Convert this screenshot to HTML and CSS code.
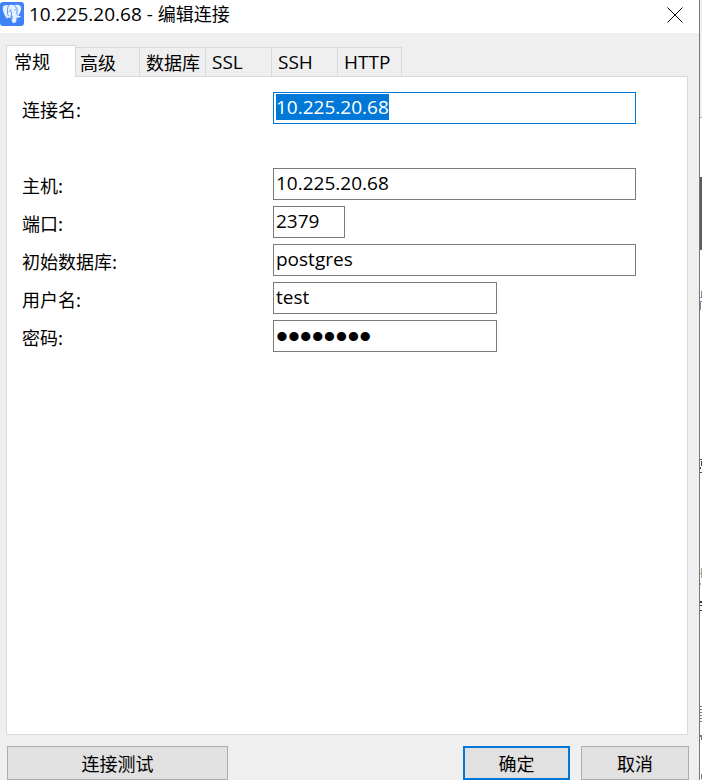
FILE: index.html
```html
<!DOCTYPE html>
<html lang="zh-CN">
<head>
<meta charset="utf-8">
<meta name="viewport" content="width=device-width, initial-scale=1">
<title>10.225.20.68 - 编辑连接</title>
<link rel="stylesheet" href="styles.css">
</head>
<body>
<form class="dialog">
  <header class="titlebar">
    <svg class="logo" viewBox="0 0 24 24" aria-hidden="true">
      <rect width="24" height="24" rx="3" fill="#3f82f7"/>
      <path fill="#e4f2ff" d="M3.2 4.3C4.8 2.6 7.2 3.2 8.6 3.500c2-1 4.200-1 6-.3 2.300-.7 4.700-.4 6 1 1.500 2-.1 6.200-2.200 9.300.6.700 1.700.4 2.400.7-.8 1.500-2.800 1.700-4.200 1.200-.2 2 .1 4.200-1.300 5.200-1 .7-2.700.5-3.200-.8-.6-1.600-.2-3.300-.6-5-.7.700-1.800 1.300-2.800.7-.6.800-1.500 1.200-2.200.4C4.300 13.400 1.700 6.500 3.200 4.300z"/>
      <path fill="none" stroke="#3f82f7" stroke-width=".9" stroke-linecap="round" d="M8.300 4.200c-1.300 2-.4 4.300-.8 6.500-.1 1.300.4 2.400 1.200 3.300M14.800 3.800c2 1.800 2.800 3.800 2 6-.4 1.500.4 2.400 1 3.500M9.200 9.300c1.300-.8 2.400-.3 2.400 1.200 0 1.600-.2 2.800-.4 4.200M12 14.200l.2 2"/>
      <circle cx="10.400" cy="7.800" r=".6" fill="#3f82f7"/><circle cx="15" cy="7.600" r=".6" fill="#3f82f7"/>
    </svg>
    <h1 class="title"><span class="latin">10.225.20.68 - </span>编辑连接</h1>
    <button class="close" type="button" aria-label="关闭">
      <svg viewBox="0 0 16 16" aria-hidden="true"><path d="M.5.5l15 15M15.500.5l-15 15"/></svg>
    </button>
  </header>
  <nav class="tabs" role="tablist">
    <button class="tab active" type="button" role="tab" aria-selected="true">常规</button>
    <button class="tab" type="button" role="tab">高级</button>
    <button class="tab" type="button" role="tab">数据库</button>
    <button class="tab latin" type="button" role="tab">SSL</button>
    <button class="tab latin" type="button" role="tab">SSH</button>
    <button class="tab latin" type="button" role="tab">HTTP</button>
  </nav>
  <main class="panel" role="tabpanel">
    <div class="row name-row"><label for="name">连接名:</label><input id="name" class="field" type="text" value="10.225.20.68"></div>
    <div class="row"><label for="host">主机:</label><input id="host" class="field" type="text" value="10.225.20.68"></div>
    <div class="row"><label for="port">端口:</label><input id="port" class="field port" type="text" value="2379"></div>
    <div class="row"><label for="database">初始数据库:</label><input id="database" class="field" type="text" value="postgres"></div>
    <div class="row"><label for="user">用户名:</label><input id="user" class="field medium" type="text" value="test"></div>
    <div class="row"><label for="password">密码:</label><input id="password" class="field medium secret" type="password" value="password"></div>
  </main>
  <footer class="actions">
    <button class="action test" type="button">连接测试</button>
    <button class="action ok" type="submit">确定</button>
    <button class="action" type="button">取消</button>
  </footer>
</form>
<aside class="backdrop" aria-hidden="true">
  <svg width="2" height="780" viewBox="0 0 2 780" shape-rendering="crispEdges">
    <path fill="#f1f1f1" d="M0 0h2v117H0z"/>
    <path fill="#aaa" d="M0 117h2v1H0z"/>
    <path fill="#5c5c5c" d="M0 177h2v73H0z"/>
    <path fill="#7890a8" d="M1 291h1v6H1zM0 297h2v1H0zM0 301h2v1H0zM0 302h1v8H0z"/>
    <path fill="#444" d="M0 459h2v1H0zM1 461h1v5H1zM0 467h1v2H0zM0 472h2v1H0z"/>
    <path fill="#a99b88" d="M1 568h1v10H1zM0 573h2v1H0zM0 583h1v2H0z"/>
    <path fill="#333" d="M0 601h2v2H0zM0 605h2v1H0zM0 610h2v1H0z"/>
    <path fill="#777" d="M0 706h2v1H0zM0 709h2v1H0zM0 712h2v1H0zM0 715h2v1H0zM0 718h2v1H0zM0 721h2v1H0zM0 735h2v2H0zM1 737h1v3H1zM1 774h1v5H1z"/>
  </svg>
</aside>
<script src="script.js"></script>
</body>
</html>
```
FILE: styles.css
```css
* {
  box-sizing: border-box;
}

body {
  display: flex;
  min-height: 100vh;
  margin: 0;
  background: #fff;
  color: #000;
  font-family: "Noto Sans CJK SC", sans-serif;
  font-size: 18px;
  font-weight: 400;
  line-height: 24px;
}

button,
input {
  margin: 0;
  border-radius: 0;
  color: inherit;
  font: inherit;
}

.latin,
.field {
  font-family: "Open Sans", "Noto Sans", sans-serif;
  font-size: 19px;
}

.dialog {
  display: flex;
  flex: 1;
  flex-direction: column;
  min-width: 0;
  border-right: 1px solid #777;
  background: #efefef;
}

.titlebar {
  display: flex;
  align-items: flex-start;
  height: 33px;
  background: #fff;
}

.logo {
  width: 24px;
  height: 24px;
  margin-top: 2px;
}

.title {
  flex: 1;
  margin: 1px 0 0 5px;
  font-size: 18px;
  font-weight: 400;
  white-space: pre;
}

.close {
  display: flex;
  padding: 7px 16px 0 0;
  border: 0;
  background: none;
}

.close svg {
  width: 16px;
  height: 16px;
  fill: none;
  stroke: #000;
}

.tabs {
  display: flex;
  align-items: flex-end;
  margin: 12px 0 0 6px;
}

.tab {
  width: 66px;
  height: 29px;
  padding: 0 0 1px 6px;
  border: 1px solid #d9d9d9;
  border-width: 1px 1px 0 0;
  background: #efefef;
  text-align: left;
  white-space: nowrap;
}

.tab.active {
  width: 70px;
  height: 32px;
  margin: 0 -2px -1px 0;
  padding: 0 0 1px 7px;
  border-left-width: 1px;
  background: #fff;
  z-index: 1;
}

.tab:last-child {
  width: 64px;
}

.panel {
  display: flex;
  flex: 1;
  flex-direction: column;
  gap: 6px;
  margin: 0 11px 0 6px;
  padding: 15px 51px 15px 15px;
  border: 1px solid #d9d9d9;
  background: #fff;
}

.row {
  display: grid;
  grid-template-columns: 251px 1fr;
  align-items: center;
}

.name-row {
  margin-bottom: 38px;
}

.row label {
  padding-top: 2px;
}

.field {
  width: 100%;
  height: 32px;
  padding: 0 2px 2px;
  border: 1px solid #7a7a7a;
  outline: 0;
  background: #fff;
}

.field:focus {
  border-color: #0078d7;
}

.field::selection {
  background: #0078d7;
  color: #fff;
}

.port {
  width: 72px;
}

.medium {
  width: 224px;
}

.secret {
  padding: 0 2px;
  font-family: "Liberation Sans", sans-serif;
  font-size: 34px;
}

.actions {
  display: flex;
  gap: 11px;
  margin: 11px 10px 0 7px;
}

.action {
  width: 108px;
  height: 34px;
  padding: 0;
  border: 1px solid #adadad;
  background: #e1e1e1;
}

.test {
  width: 221px;
  margin-right: auto;
}

.ok {
  width: 107px;
  border: 2px solid #0078d7;
}

.backdrop {
  display: flex;
  width: 2px;
  overflow: hidden;
}
```
FILE: script.js
```js
const nameField = document.getElementById("name");
nameField.focus();
nameField.select();
```
